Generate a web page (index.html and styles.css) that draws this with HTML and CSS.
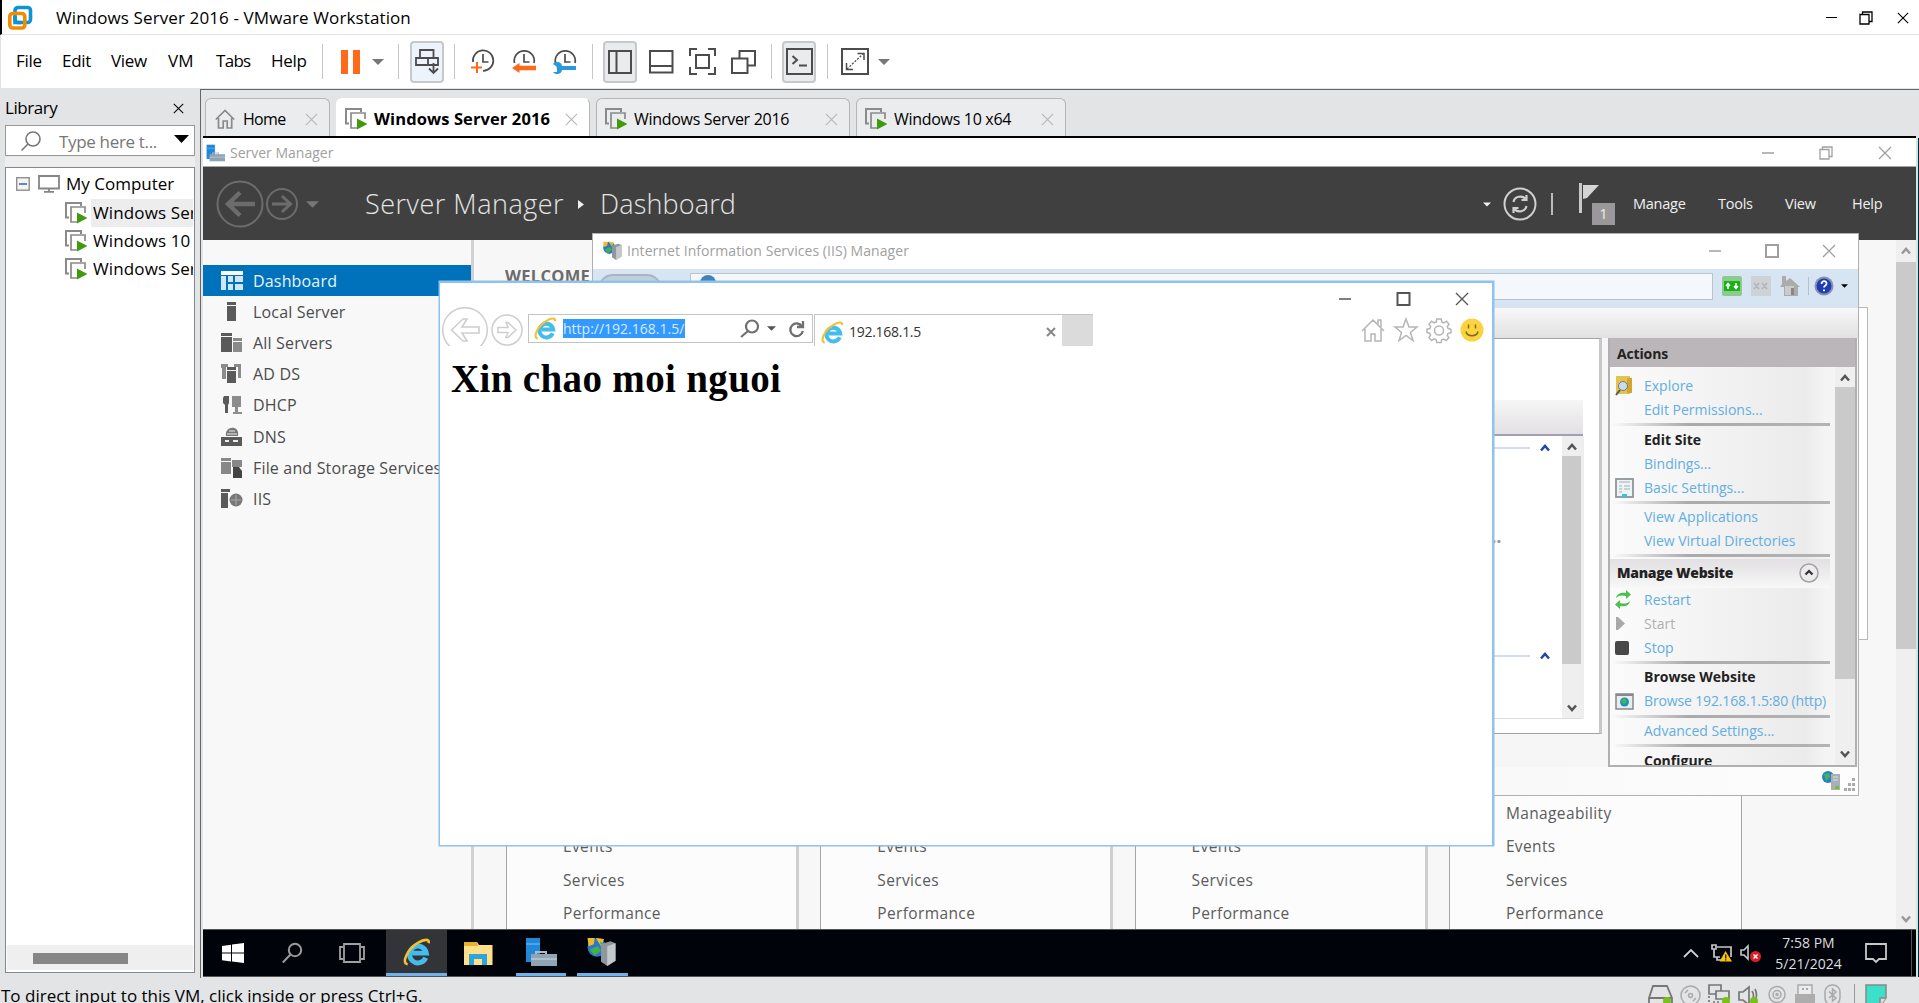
FILE: index.html
```html
<!DOCTYPE html>
<html lang="en">
<head>
<meta charset="utf-8">
<title>Windows Server 2016 - VMware Workstation</title>
<link rel="stylesheet" href="styles.css">
</head>
<body>
<svg class="defs" width="0" height="0">
  <symbol id="vm" viewBox="0 0 22 22"><path d="M4 15.500H1V1h15v3" fill="none" stroke="#8a8a8a" stroke-width="2"/><path d="M12 20H6V5h14v6" fill="none" stroke="#8a8a8a" stroke-width="1.700"/><path d="M12 10.500v11l10.500-5.500z" fill="#3f9b0b"/></symbol>
  <symbol id="cross" viewBox="0 0 14 14"><path d="M1 1l12 12M13 1L1 13" fill="none" stroke="currentColor" stroke-width="1.300"/></symbol>
  <symbol id="min" viewBox="0 0 14 14"><path d="M1 7h12" stroke="currentColor" stroke-width="1.500"/></symbol>
  <symbol id="max" viewBox="0 0 14 14"><path d="M1 1h12v12H1z" fill="none" stroke="currentColor" stroke-width="2"/></symbol>
  <symbol id="restore" viewBox="0 0 14 14"><path d="M1 3.500h9V13H1zM3.500 3V1H13v9.500h-2.500" fill="none" stroke="currentColor" stroke-width="1.300"/></symbol>
  <symbol id="caret" viewBox="0 0 12 6"><path d="M0 0h12L6 6z" fill="currentColor"/></symbol>
  <symbol id="up" viewBox="0 0 10 8"><path d="M1 6.500l4-4.500 4 4.500" fill="none" stroke="currentColor" stroke-width="2.500"/></symbol>
  <symbol id="down" viewBox="0 0 10 8"><path d="M1 1.500L5 6l4-4.500" fill="none" stroke="currentColor" stroke-width="2.500"/></symbol>
  <symbol id="ie" viewBox="0 0 24 24"><path d="M19.500 17A7.200 7.200 0 1 1 20 13H8" fill="none" stroke="#45bdec" stroke-width="4.200"/><path d="M4 22.500C-2 22 4 9 13 4c5-3 10-3.500 9 .5" fill="none" stroke="#f2c230" stroke-width="2.200"/></symbol>
  <symbol id="sm" viewBox="0 0 32 28"><path d="M1 0h14v24H1z" fill="#2188d8"/><path d="M1 6h14" stroke="#57aef0" stroke-width="1.500"/><path d="M11 17v-3h10v3" fill="none" stroke="#a9bccb" stroke-width="2"/><path d="M6 16h26v12H6z" fill="#8fa5b5"/><path d="M6 21h26" stroke="#b9c8d4" stroke-width="1.500"/></symbol>
  <symbol id="iis" viewBox="0 0 28 28"><circle cx="10" cy="10" r="9" fill="#2a78c8"/><path d="M1 1h7l-1 6-5 2zM9 1l8 1-3 7z" fill="#f2bb2e"/><path d="M3 12l8-3 3 4-6 5zM13 4l5 4-3 5z" fill="#45b04a"/><path d="M14 7l9-3 5 2v17l-8 5-6-4z" fill="#8e979d"/><path d="M20 9l8-3v17l-8 5z" fill="#c3c8cb"/></symbol>
</svg>

<header class="titlebar">
  <svg class="logo" viewBox="0 0 24 24"><rect x="7" y="1.500" width="15.500" height="15" rx="3" fill="none" stroke="#0f94d2" stroke-width="3.600"/><rect x="1.800" y="7.500" width="15" height="14.500" rx="3" fill="none" stroke="#f38b00" stroke-width="3.600"/><path d="M7 10v6.500h6" fill="none" stroke="#0f94d2" stroke-width="3.600"/></svg>
  <span>Windows Server 2016 - VMware Workstation</span>
  <div class="winctl"><svg width="12" height="14"><path d="M0 6.500h11" stroke="#000"/></svg><svg width="14" height="14"><use href="#restore"/></svg><svg width="12" height="14"><use href="#cross"/></svg></div>
</header>

<nav class="menubar">
  <span class="m1">File</span><span class="m2">Edit</span><span class="m3">View</span><span class="m4">VM</span><span class="m5">Tabs</span><span class="m6">Help</span>
  <i class="sep s1"></i>
  <svg class="pause" width="19" height="24"><path d="M0 0h7v24H0zM12 0h7v24h-7z" fill="#ff6a1a"/></svg>
  <svg class="drop" width="12" height="6"><use href="#caret"/></svg>
  <i class="sep s2"></i>
  <span class="btn send"><svg width="24" height="26" fill="none" stroke="#4c4c4c" stroke-width="1.800"><path d="M5 9V1h13.500v8M1 9h22v7H1zM13 9v7M18.500 14v10M14 19.500l4.500 4.500 4.500-4.500"/></svg></span>
  <i class="sep s3"></i>
  <svg class="clk" width="24" height="26"><path d="M2 13A10.200 10.200 0 1 1 12 21.800" fill="none" stroke="#4c4c4c" stroke-width="1.700"/><path d="M12 5v8h5.500" fill="none" stroke="#4c4c4c" stroke-width="1.700"/><path d="M6 13v11M0 18.500h11" stroke="#ff6a1a" stroke-width="2"/></svg>
  <svg class="clk" width="24" height="26"><path d="M2.500 14a10 10 0 1 1 19.500 0" fill="none" stroke="#4c4c4c" stroke-width="1.700"/><path d="M12 5v8h5.500" fill="none" stroke="#4c4c4c" stroke-width="1.700"/><path d="M0 19l7.500-5v2.700H24v4.600H7.500V24z" fill="#ff6a1a"/></svg>
  <svg class="clk" width="24" height="26"><path d="M2.500 14a10 10 0 1 1 19.500 0" fill="none" stroke="#4c4c4c" stroke-width="1.700"/><path d="M12 5v8h5.500" fill="none" stroke="#4c4c4c" stroke-width="1.700"/><path d="M0 15a5 5 0 0 1 9 2h14v4H9a5 5 0 0 1-9 2h4v-2.500l-.5-3z" fill="#2a98dc"/></svg>
  <i class="sep s4"></i>
  <span class="btn tall"><svg width="24" height="24" fill="none" stroke="#4c4c4c" stroke-width="2"><path d="M1 1h22v22H1zM8.500 1v22"/></svg></span>
  <svg class="i1" width="25" height="24" fill="none" stroke="#4c4c4c" stroke-width="2"><path d="M1 1h22.500v21.500H1zM1 16h23"/></svg>
  <svg class="i2" width="27" height="27" fill="none" stroke="#4c4c4c" stroke-width="2"><path d="M8 1H1v7M19 1h7v7M8 26H1v-7M19 26h7v-7M7 7h13v13H7z"/></svg>
  <svg class="i3" width="25" height="24" fill="none" stroke="#4c4c4c" stroke-width="2"><path d="M1 8.500h15.500V23H1zM8.500 8V1H24v14.500h-7"/></svg>
  <i class="sep s5"></i>
  <span class="btn tall"><svg width="27" height="27" fill="none" stroke="#4c4c4c" stroke-width="2"><path d="M1 1h25v25H1zM6.500 8l4.500 4-4.500 4M13 17.500h8"/></svg></span>
  <i class="sep s6"></i>
  <svg class="i4" width="28" height="27" fill="none" stroke="#4c4c4c" stroke-width="2"><path d="M1 1h26v25H1z"/><path d="M16.500 5.500H23V12M5.500 15v6.500H12" stroke-width="1.500"/><path d="M6 21L22 6" stroke-width="1.300" stroke-dasharray="2 1.500"/></svg>
  <svg class="drop" width="12" height="6"><use href="#caret"/></svg>
</nav>

<div class="main">
  <aside class="library">
    <div class="libhead"><span>Library</span><svg width="11" height="11"><use href="#cross"/></svg></div>
    <div class="search"><svg width="20" height="20" fill="none" stroke="#777" stroke-width="1.600"><circle cx="12" cy="8" r="7"/><path d="M7 13l-6.500 6.500"/></svg><span>Type here t...</span><svg class="sc" width="15" height="8"><path d="M0 0h15L7.500 8z"/></svg></div>
    <div class="tree">
      <div class="root"><svg width="14" height="14"><rect x=".7" y=".7" width="12.500" height="12.500" fill="#f4f4f4" stroke="#8f8f8f" stroke-width="1.400"/><path d="M3 7h8" stroke="#3a5fae" stroke-width="1.500"/></svg><svg width="22" height="18" fill="none" stroke="#858585" stroke-width="1.800"><path d="M1 1h20v12.500H1zM11 13v3.500M6 16.800h10"/></svg><span>My Computer</span></div>
      <div class="vmrow"><svg width="22" height="22"><use href="#vm"/></svg><span class="hl">Windows Server 2016</span></div>
      <div class="vmrow"><svg width="22" height="22"><use href="#vm"/></svg><span>Windows 10 x64</span></div>
      <div class="vmrow"><svg width="22" height="22"><use href="#vm"/></svg><span>Windows Server 2016</span></div>
      <div class="hscroll"><i></i></div>
    </div>
  </aside>

  <section class="work">
    <div class="tabs">
      <div class="tab t1"><svg width="20" height="20" fill="none" stroke="#8a8a8a" stroke-width="1.700"><path d="M.8 10.500L10 1.500l9.200 9M3.500 9v10h4.700v-7h4v7h4.500V9"/></svg><span>Home</span><svg class="x" width="13" height="13"><use href="#cross"/></svg></div>
      <div class="tab t2"><svg width="22" height="22"><use href="#vm"/></svg><span>Windows Server 2016</span><svg class="x" width="13" height="13"><use href="#cross"/></svg></div>
      <div class="tab t3"><svg width="22" height="22"><use href="#vm"/></svg><span>Windows Server 2016</span><svg class="x" width="13" height="13"><use href="#cross"/></svg></div>
      <div class="tab t4"><svg width="22" height="22"><use href="#vm"/></svg><span>Windows 10 x64</span><svg class="x" width="13" height="13"><use href="#cross"/></svg></div>
    </div>

    <div class="desk">
      <div class="smtitle"><svg width="19" height="18"><use href="#sm"/></svg><span>Server Manager</span><svg class="c1" width="14" height="14"><use href="#min"/></svg><svg class="c2" width="14" height="14"><use href="#restore"/></svg><svg class="c3" width="14" height="14"><use href="#cross"/></svg></div>
      <div class="smhead">
        <svg class="back" width="48" height="48" fill="none" stroke="#6c6c6c"><circle cx="24" cy="24" r="22.500" stroke-width="2"/><path d="M39 24H12M24 12.500L12 24l12 11.500" stroke-width="4.500"/></svg>
        <svg class="fwd" width="32" height="32" fill="none" stroke="#6c6c6c"><circle cx="16" cy="16" r="15" stroke-width="2"/><path d="M6 16h18M16 8l8.500 8-8.500 8" stroke-width="3"/></svg>
        <svg class="dd" width="13" height="7"><use href="#caret"/></svg>
        <span class="crumb a">Server Manager</span><svg class="tri" width="6" height="9"><path d="M0 0v9l6-4.500z" fill="#eee"/></svg><span class="crumb">Dashboard</span>
        <div class="smright">
          <svg width="8" height="5"><use href="#caret"/></svg>
          <svg class="ref" width="34" height="34" fill="none" stroke="#cfcfcf"><circle cx="17" cy="17" r="15.500" stroke-width="2"/><path d="M10.500 15c1-6 9-7 12-3M23.500 8v5h-5M23.500 19c-1 6-9 7-12 3M10.500 26v-5h5" stroke-width="2.200"/></svg>
          <i class="bar"></i>
          <span class="flag"><svg width="21" height="30"><path d="M0 0h3v30H0z" fill="#c9c9c9"/><path d="M4 2h16L8 15l-4 1z" fill="#d5d5d5"/></svg><em>1</em></span>
          <span class="r1">Manage</span><span class="r2">Tools</span><span class="r3">View</span><span class="r4">Help</span>
        </div>
      </div>
      <div class="smbody">
        <div class="smnav">
          <div class="on"><svg width="22" height="20"><path d="M0 0h22v4H0z" fill="#fff"/><path d="M0 5h5v14H0zM7 5h5v6H7zM14 5h8v6h-8zM7 13h5v6H7zM14 13h8v6h-8z" fill="#cfe6f7"/></svg><span>Dashboard</span></div>
          <div><svg width="22" height="20" fill="#5a5a5a"><path d="M6 0h9v3H6zM6 4h9v15H6z"/></svg><span>Local Server</span></div>
          <div><svg width="22" height="20" fill="#5a5a5a"><path d="M0 0h11v3H0zM0 4h11v15H0z"/><path d="M12 5h9v3h-9zM12 9h9v10h-9z" fill="#8a8a8a"/></svg><span>All Servers</span></div>
          <div><svg width="22" height="20" fill="#5a5a5a"><path d="M0 0h7v3H5v12H1V4H0zM13 0h7v14h-3V3h-4z" fill="#8c8c8c"/><path d="M6 3h9v3H6zM6 7h9v12H6z"/></svg><span>AD DS</span></div>
          <div><svg width="22" height="20" fill="#5a5a5a"><path d="M3 1h5v7l-1 2v8H4v-8L2 8V3z"/><path d="M11 1h9v11h-9zM14 12h3v5h4v2h-9v-2h2z" fill="#8c8c8c"/></svg><span>DHCP</span></div>
          <div><svg width="22" height="20" fill="#5a5a5a"><path d="M5 9c-2-10 14-12 12 0z" fill="#777"/><path d="M8 4h6M6 7h10" stroke="#eee"/><path d="M0 10h21v9H0z"/><path d="M4 14h4M12 14h5" stroke="#eee" stroke-width="2"/></svg><span>DNS</span></div>
          <div><svg width="22" height="20" fill="#888"><path d="M0 0h10v3H0zM0 4h10v12H0zM11 2h10v7H11z"/><path d="M12 9h6l3 4v7h-9z" fill="#444"/></svg><span>File and Storage Services</span></div>
          <div><svg width="22" height="20" fill="#5a5a5a"><path d="M0 0h9v3H0zM0 4h7v15H0z"/><circle cx="15" cy="11" r="6.500" fill="#777"/><path d="M10 11h10M15 6v10" stroke="#aaa"/></svg><span>IIS</span></div>
        </div>
        <div class="smcontent">
          <h2>WELCOME</h2>
          <div class="welcome"></div>
          <div class="cards">
            <ul><li>Manageability<li>Events<li>Services<li>Performance</ul>
            <ul><li>Manageability<li>Events<li>Services<li>Performance</ul>
            <ul><li>Manageability<li>Events<li>Services<li>Performance</ul>
            <ul><li>Manageability<li>Events<li>Services<li>Performance</ul>
          </div>
        </div>
        <div class="vscroll big"><svg width="10" height="8"><use href="#up"/></svg><i></i><svg width="10" height="8"><use href="#down"/></svg></div>
      </div>
      <div class="taskbar">
        <svg class="k1" width="22" height="20" fill="#fff"><path d="M0 3l9-1.300V9.500H0zM10 1.500L22 0v9.500H10zM0 10.500h9v8L0 17.300zM10 10.500h12V20l-12-1.500z"/></svg>
        <svg class="k2" width="20" height="20" fill="none" stroke="#9a9a9a" stroke-width="2"><circle cx="13" cy="7" r="6.200"/><path d="M8.500 11.500L.8 19.500"/></svg>
        <svg class="k3" width="26" height="20" fill="none" stroke="#a0a0a0" stroke-width="1.800"><path d="M5 1h16v18H5zM4 4H1v12h3M22 4h3v12h-3"/></svg>
        <span class="run ie"><svg width="28" height="28"><use href="#ie"/></svg></span>
        <svg class="k4" width="29" height="23"><path d="M0 0h13l2 3h13.500v20H0z" fill="#ffe08a"/><path d="M0 0h13l1 4H0z" fill="#e5b22f"/><path d="M5 23V12h18v11h-5v-6h-8v6z" fill="#2ea3dc"/></svg>
        <span class="run s"><svg width="32" height="28"><use href="#sm"/></svg></span>
        <span class="run i"><svg width="30" height="29"><use href="#iis"/></svg></span>
        <div class="tray">
          <svg width="16" height="9" fill="none" stroke="#d0d0d0" stroke-width="1.800"><path d="M1 8l7-7 7 7"/></svg>
          <svg class="y2" width="21" height="18"><path d="M1 1h4v4H1zM6 3h14v10M3 5v8h6M6 13v3h5" fill="none" stroke="#c8c8c8" stroke-width="1.700"/><path d="M14.500 7L21 17.500H8.500z" fill="#fdbf0f"/><path d="M14.700 10.500v4M14.700 15.300v1.300" stroke="#222" stroke-width="1.400"/></svg>
          <svg class="y3" width="22" height="18"><path d="M1 5h3l4-4v13l-4-4H1z" fill="none" stroke="#c8c8c8" stroke-width="1.600"/><circle cx="15.500" cy="11.500" r="5.500" fill="#d9202a"/><path d="M13.500 9.500l4 4M17.500 9.500l-4 4" stroke="#fff" stroke-width="1.400"/></svg>
          <div class="clock"><span>7:58 PM</span><span>5/21/2024</span></div>
          <svg class="y4" width="22" height="20" fill="none" stroke="#c8c8c8" stroke-width="1.800"><path d="M1 1h20v15h-7l-3 3-3-3H1z"/></svg>
          <i></i>
        </div>
      </div>

      <div class="iiswin">
        <div class="iistitle"><svg width="20" height="19"><use href="#iis"/></svg><span>Internet Information Services (IIS) Manager</span><svg class="c1" width="14" height="14"><use href="#min"/></svg><svg class="c2" width="14" height="14"><use href="#max"/></svg><svg class="c3" width="14" height="14"><use href="#cross"/></svg></div>
        <div class="iisaddr">
          <i class="pill"></i>
          <div class="field"><svg width="18" height="18"><circle cx="9" cy="5" r="8" fill="#3f83b8"/></svg></div>
          <svg class="a1" width="20" height="20"><rect width="20" height="20" rx="2" fill="#8fc98f"/><path d="M2 5h16v10H2z" fill="#16b316"/><path d="M6 13V8M4 10l2-2.500L8 10M14 7v5M12 10l2 2.500 2-2.500" fill="none" stroke="#fff" stroke-width="1.600"/></svg>
          <svg class="a2" width="20" height="20"><rect width="20" height="20" rx="1" fill="#cdd2d7"/><path d="M3 7l5 6M8 7l-5 6M11 7l5 6M16 7l-5 6" stroke="#b0b5ba" stroke-width="1.600"/></svg>
          <svg class="a3" width="20" height="20"><path d="M2 0h4v5l4-3 10 9h-2v9H4v-9H0l2-3z" fill="#a9abad"/><path d="M5 10h9v9H5z" fill="#c9cbcd"/><path d="M11 12h3v7h-3z" fill="#888"/></svg>
          <i class="vs"></i>
          <svg class="a4" width="20" height="20"><circle cx="10" cy="10" r="9.500" fill="#8592b5"/><circle cx="10" cy="10" r="7.500" fill="#1d3db2"/><path d="M7.500 8c0-4 5.500-3.500 5 0-.3 1.500-2.500 2-2.500 3.500M10 13.500v1.800" fill="none" stroke="#fff" stroke-width="1.800"/></svg>
          <svg class="a5" width="7" height="4"><use href="#caret"/></svg>
        </div>
        <div class="iisband"></div>
        <div class="iismain">
          <div class="features">
            <div class="fhead"></div>
            <div class="flist"><div class="fgroups"><div class="g g1"><i></i><svg width="10" height="8"><use href="#up"/></svg></div><b class="dots">...</b><div class="g g2"><i></i><svg width="10" height="8"><use href="#up"/></svg></div></div>
              <div class="vscroll mid"><svg width="10" height="8"><use href="#up"/></svg><i></i><svg width="10" height="8"><use href="#down"/></svg></div></div>
          </div>
          <div class="actions">
            <div class="ahead"><b>Actions</b></div>
            <div class="abody">
              <div class="alist">
                <p><svg width="18" height="20"><path d="M1 0h14v18H1z" fill="#e6c24f"/><path d="M12 2h5v15h-5z" fill="#d2a52e"/><circle cx="8" cy="10" r="4.500" fill="#c8dcea" stroke="#6b7c88"/><path d="M5 14l-4 5" stroke="#555" stroke-width="2"/></svg><span>Explore</span></p>
                <p><span>Edit Permissions...</span></p><hr>
                <p><b>Edit Site</b></p>
                <p><span>Bindings...</span></p>
                <p><svg width="19" height="20"><rect x="1" y="1" width="17" height="18" fill="#eef3f6" stroke="#8e9499" stroke-width="1.800"/><path d="M4 4h11M4 8h3M9 8h6M4 11h3M9 11h6M4 14h3" stroke="#a3adb5"/><path d="M7 16h5v3H7z" fill="#35c3dd"/></svg><span>Basic Settings...</span></p><hr>
                <p><span>View Applications</span></p>
                <p><span>View Virtual Directories</span></p><hr>
                <h3><b>Manage Website</b><svg width="20" height="20"><circle cx="10" cy="10" r="9" fill="#ececec" stroke="#a2a2a2" stroke-width="1.500"/><path d="M6.500 11.500L10 8l3.500 3.500" fill="none" stroke="#333" stroke-width="2.200"/></svg></h3>
                <p><svg width="16" height="19" fill="#4cc04c"><path d="M1 8c1-5 6-6 10-5V0l5 4.500L11 9V6C7 5 4 5 1 8zM15 11c-1 5-6 6-10 5v3l-5-4.500L5 10v3c4 1 7 1 10-2z"/></svg><span>Restart</span></p>
                <p class="off"><svg width="10" height="13"><path d="M1 0h2l7 6.500L3 13H1z" fill="#a8a8a8"/></svg><span>Start</span></p>
                <p><svg width="14" height="14"><rect width="14" height="14" rx="2" fill="#484848"/></svg><span>Stop</span></p><hr>
                <p><b>Browse Website</b></p>
                <p><svg width="19" height="17"><rect x="1" y="1" width="17" height="15" fill="#e9edf0" stroke="#85898d" stroke-width="1.500"/><path d="M1 2h17" stroke="#85898d" stroke-width="2"/><circle cx="9.500" cy="9" r="4.500" fill="#1c93b5"/><circle cx="9" cy="8" r="2.500" fill="#40b85c"/></svg><span class="tight">Browse 192.168.1.5:80 (http)</span></p><hr>
                <p><span>Advanced Settings...</span></p><hr>
                <p><b>Configure</b></p>
              </div>
              <div class="vscroll act"><svg width="10" height="8"><use href="#up"/></svg><i></i><svg width="10" height="8"><use href="#down"/></svg></div>
            </div>
          </div>
        </div>
        <div class="iisstatus"><svg width="19" height="20"><circle cx="6" cy="6" r="6" fill="#2a7fc4"/><path d="M2 3l5-1 1 4-4 4z" fill="#44b45c"/><path d="M9 3h9v16H9z" fill="#a9afb3"/><path d="M11 6h5M11 9h5" stroke="#e0e0e0"/><path d="M13 15h4v3h-4z" fill="#67c73c"/></svg><svg width="11" height="14" fill="#aaa"><path d="M8 0h3v3H8zM4 5h3v3H4zM8 5h3v3H8zM0 10h3v3H0zM4 10h3v3H4zM8 10h3v3H8z"/></svg></div>
      </div>

      <div class="iewin">
        <div class="ietitle"><svg class="c1" width="14" height="14"><use href="#min"/></svg><svg class="c2" width="15" height="14"><use href="#max"/></svg><svg class="c3" width="14" height="14"><use href="#cross"/></svg></div>
        <div class="iebar">
          <svg class="b1" width="47" height="40" fill="none" stroke="#cecece"><circle cx="23" cy="23" r="22.300" stroke-width="1.500"/><path d="M9.500 23L21 12h4l-5 8h17v6H20l5 8h-4z" stroke-width="1.600"/></svg>
          <svg class="b2" width="32" height="32" fill="none" stroke="#cecece"><circle cx="16" cy="16" r="15" stroke-width="1.500"/><path d="M25 16l-8-7.500h-2l2 5H7v5h10l-2 5h2z" stroke-width="1.500"/></svg>
          <div class="url"><svg width="23" height="23"><use href="#ie"/></svg><span>http://192.168.1.5/</span><svg class="u1" width="20" height="19" fill="none" stroke="#6f6f6f" stroke-width="2.200"><circle cx="12" cy="7.500" r="6"/><path d="M8 12l-7 6"/></svg><svg class="u2" width="9" height="5"><use href="#caret"/></svg><svg class="u3" width="17" height="18" fill="none" stroke="#6f6f6f" stroke-width="2.300"><path d="M14 6.500A6.300 6.300 0 1 0 14.800 11M15 1v6H9"/></svg></div>
          <div class="ietab"><svg width="23" height="23"><use href="#ie"/></svg><span>192.168.1.5</span><svg class="x" width="10" height="10"><path d="M1 1l8 8M9 1L1 9" stroke="#888" stroke-width="2"/></svg></div>
          <div class="newtab"></div>
          <div class="iecmd">
            <svg width="24" height="24" fill="none" stroke="#b5b5b5" stroke-width="1.500"><path d="M1 13L12 2l11 11M4 11v12h6v-7h4v7h6V11M17 6V2h3v7"/></svg>
            <svg width="24" height="24" fill="none" stroke="#b5b5b5" stroke-width="1.500"><path d="M12 1l3 8h8l-6.500 5.500 2.500 8-7-5-7 5 2.500-8L1 9h8z"/></svg>
            <svg width="24" height="24" fill="none" stroke="#b5b5b5" stroke-width="1.500"><path d="M9.800 1h4.400l.6 3 2 .8 2.700-1.600 2.500 3-1.700 2.400.8 2 2.900.7v3.400l-3 .7-.8 2 1.700 2.400-2.700 2.800-2.500-1.600-2 .8-.5 2.700H9.800l-.6-2.800-2-.8-2.600 1.600-2.600-2.800 1.600-2.500-.8-2L0 14.500v-3.300l2.900-.6.8-2L2 6.200l2.600-3 2.600 1.600 2-.8z"/><circle cx="12" cy="12.500" r="4.500"/></svg>
            <svg width="24" height="24"><circle cx="12" cy="12" r="11.500" fill="#fcd33f"/><path d="M8.500 6.500v4M15.500 6.500v4M6 13.500c1 5.500 11 5.500 12 0" fill="none" stroke="#7d6b1f" stroke-width="1.500"/></svg>
          </div>
        </div>
        <h1>Xin chao moi nguoi</h1>
      </div>
    </div>
    <i class="edge"></i>
  </section>
</div>

<footer class="status">
  <span>To direct input to this VM, click inside or press Ctrl+G.</span>
  <div class="devs">
    <svg class="d1" width="25" height="22"><path d="M5 2h14l5 12v7H1v-7zM1 14h23" fill="none" stroke="#777" stroke-width="1.800"/><circle cx="19" cy="17" r="4" fill="#7ac117"/></svg>
    <svg class="d2" width="21" height="22" fill="none" stroke="#a9a9a9" stroke-width="1.500"><circle cx="10.500" cy="11.500" r="9.500"/><circle cx="10.500" cy="11.500" r="2"/><path d="M5 9l3-3M13 17l3-3"/></svg>
    <svg class="d3" width="22" height="22"><path d="M1 1h12v9H1z" fill="none" stroke="#777" stroke-width="1.700"/><path d="M8 7h13v8H8z" fill="#e3e4e6" stroke="#777" stroke-width="1.700"/><path d="M1 12v9M5 18h6" fill="none" stroke="#777" stroke-width="1.700" stroke-dasharray="2 2"/><circle cx="18" cy="17" r="4" fill="#7ac117"/></svg>
    <svg class="d4" width="21" height="22"><path d="M1 8h4l6-5v18l-6-5H1zM14 7c2 3 2 6 0 9M17 5c2 4 2 8 0 12" fill="none" stroke="#777" stroke-width="1.700"/><circle cx="16" cy="17" r="4" fill="#7ac117"/></svg>
    <svg class="d5" width="18" height="22" fill="none" stroke="#a9a9a9" stroke-width="1.500"><circle cx="9" cy="10.500" r="8"/><circle cx="9" cy="10.500" r="4"/><circle cx="9" cy="10.500" r="1"/><path d="M3 20h12"/></svg>
    <svg class="d6" width="20" height="22"><path d="M3 1h14v10H3z" fill="#ececec" stroke="#a9a9a9" stroke-width="1.500"/><path d="M7 5h2M11 5h2" stroke="#a9a9a9" stroke-width="2"/><path d="M0 10h20v12H0z" fill="#adadad"/></svg>
    <svg class="d7" width="17" height="22" fill="none" stroke="#a9a9a9" stroke-width="1.500"><rect x="1" y="1" width="15" height="20" rx="7"/><path d="M5 7.500l7 6.500-3.500 3V5L12 8l-7 6"/></svg>
    <i></i>
    <svg class="d8" width="22" height="22"><path d="M1 1h20v13l-6 8H1z" fill="#3be0c8" stroke="#888" stroke-width="1.500"/><path d="M21 14h-6v8" fill="#ddd" stroke="#888" stroke-width="1.500"/></svg>
  </div>
</footer>
</body>
</html>
```
FILE: styles.css
```css
* { box-sizing: border-box; }
html, body { margin: 0; width: 1919px; height: 1003px; overflow: hidden; }
body { display: flex; flex-direction: column; background: #e3e4e6; color: #000; font: 17px/24px "Open Sans", "Noto Sans", sans-serif; white-space: nowrap; }
svg { display: block; flex: none; overflow: visible; }
i { display: block; flex: none; }
.defs { position: absolute; }
p, h1, h2, h3, ul, li, hr { margin: 0; padding: 0; list-style: none; border: 0; }

.titlebar { height: 35px; flex: none; display: flex; align-items: center; background: #fff; border-bottom: 1px solid #e3e3e3; border-left: 2px solid #000; padding: 2px 10px 0 6px; letter-spacing: .11px; }
.logo { width: 24px; height: 24px; margin-right: 24px; }
.winctl { margin-left: auto; display: flex; gap: 21px; }
.winctl svg:nth-child(3) { margin-left: 3px; }

/* menu and toolbar */
.menubar { height: 53px; flex: none; display: flex; align-items: center; background: #fff; border-left: 1px solid #e3e3e3; padding-left: 15px; letter-spacing: -.3px; }
.m1, .m2, .m3, .m4, .m5, .m6 { padding-bottom: 2px; }
.m1 { flex: 0 0 46px; } .m2 { flex: 0 0 49px; } .m3 { flex: 0 0 57px; } .m4 { flex: 0 0 48px; letter-spacing: .2px; } .m5 { flex: 0 0 55px; letter-spacing: -.7px; } .m6 { flex: 0 0 51px; }
.sep { width: 1px; height: 35px; background: #c6c6c6; }
.pause { margin-left: 18px; }
.drop { margin-left: 12px; color: #777; }
.s2 { margin-left: 14px; }
.btn { border: 2px solid #c6c8ca; border-radius: 4px; display: flex; align-items: center; justify-content: center; height: 42px; background: #e9ebed; flex: none; }
.send { width: 34px; margin-left: 11px; background: #edf3fb; }
.s3 { margin-left: 10px; }
.clk { margin-left: 16px; }
.clk + .clk { margin-left: 17px; }
.s4 { margin-left: 15px; }
.tall { width: 34px; margin-left: 10px; }
.i1 { margin-left: 12px; } .i2 { margin-left: 15px; } .i3 { margin-left: 15px; }
.s5 { margin-left: 15px; } .s6 { margin-left: 11px; }
.i4 { margin-left: 13px; }
.i4 + .drop { margin-left: 9px; }

/* library pane */
.main { flex: none; height: 890px; display: flex; }
.library { width: 200px; flex: none; display: flex; flex-direction: column; padding-left: 5px; }
.libhead { height: 37px; display: flex; align-items: center; padding-top: 3px; letter-spacing: -.45px; }
.libhead svg { margin-left: auto; margin-right: 16px; }
.search { width: 190px; height: 31px; border: 1px solid #989898; background: #fff; display: flex; align-items: center; color: #777; padding-left: 15px; }
.search span { margin-left: 18px; padding-top: 2px; width: 113px; letter-spacing: -.33px; }
.sc { margin-bottom: 3px; margin-left: 2px; }
.tree { width: 190px; height: 806px; margin-top: 11px; border: 1px solid #84878c; background: #fff; display: flex; flex-direction: column; box-shadow: 0 -10px 0 #eee; }
.root { height: 31px; display: flex; align-items: center; padding-left: 10px; }
.root svg + svg { margin-left: 8px; }
.root span { margin-left: 6px; }
.vmrow { height: 28px; display: flex; align-items: center; padding-left: 59px; overflow: hidden; margin-right: 1px; letter-spacing: .12px; }
.vmrow span { margin-left: 4px; padding-left: 2px; height: 28px; line-height: 27px; flex: 1; overflow: hidden; }
.hl { background: #ededed; }
.hscroll { margin: auto 1px 2px; height: 25px; background: #efefef; padding: 8px 0 0 26px; }
.hscroll i { width: 95px; height: 11px; background: #868686; }

/* tab strip and guest screen frame */
.work { flex: none; width: 1719px; height: 890px; margin-top: 1px; border: solid #666; border-width: 1px 0 0 1px; display: grid; grid-template: 46px 841px / 2px 1713px 3px; background: #e3e4e6; }
.tabs { grid-column: 1 / -1; display: flex; align-items: flex-end; padding-left: 4px; }
.tab { height: 38px; display: flex; align-items: center; background: #ebecee; border: 1px solid #b4b5b7; border-bottom: 0; border-radius: 6px 6px 0 0; padding: 3px 11px 0 8px; font-size: 16px; letter-spacing: -.3px; flex: none; }
.tab .x { margin-left: auto; color: #b9b9b9; }
.t1 { width: 125px; padding-left: 9px; letter-spacing: -.7px; } .t1 span { margin-left: 8px; }
.t2 { width: 254px; margin-left: 6px; background: #fff; font-weight: 700; border-color: #fff #b4b5b7 #fff #fff; font-size: 16.500px; letter-spacing: .1px; }
.t2 span, .t3 span, .t4 span { margin-left: 7px; }
.t3 { width: 254px; margin-left: 6px; } .t4 { width: 210px; margin-left: 6px; }
.desk { grid-column: 2; position: relative; width: 1713px; height: 841px; border-top: 2px solid #000; overflow: hidden; display: flex; flex-direction: column; background: #f7f7f7; font-size: 15px; }
.edge { grid-column: 3; margin-top: 2px; border-left: 2px solid #cfe8cf; background: #06284a; height: 839px; }

/* Server Manager */
.smtitle { height: 29px; flex: none; background: #fff; border-bottom: 1px solid #a5a5a5; display: flex; align-items: center; padding-left: 3px; padding-top: 2px; color: #a0a0a0; font-size: 14px; }
.smtitle span { margin-left: 5px; }
.smtitle .c1 { margin-left: auto; } .smtitle .c2 { margin: 0 45px 0 44px; } .smtitle .c3 { margin-right: 24px; }
.smhead { height: 73px; flex: none; background: #404040; display: flex; align-items: center; color: #e4e4e4; padding-top: 1px; }
.back { margin-left: 13px; } .fwd { margin-left: 2px; } .dd { margin: 0 46px 0 8px; color: #777; }
.crumb { font-size: 27px; font-weight: 300; letter-spacing: .15px; }
.crumb.a { letter-spacing: .5px; }
.tri { margin: 0 16px 0 14px; }
.smright { margin-left: auto; display: flex; align-items: center; font-size: 14.500px; color: #f0f0f0; padding-right: 34px; letter-spacing: -.25px; }
.ref { margin-left: 12px; }
.bar { width: 2px; height: 22px; background: #bbb; margin: 0 26px 0 14px; }
.flag { position: relative; width: 36px; height: 42px; display: block; }
.flag em { position: absolute; left: 13px; top: 20px; width: 23px; height: 22px; background: #9a989b; font-style: normal; text-align: center; line-height: 22px; font-size: 14px; }
.r1 { margin-left: 18px; width: 85px; } .r2 { width: 67px; } .r3 { width: 67px; } .r4 { width: 30px; }
.smbody { height: 689px; flex: none; display: flex; overflow: hidden; }
.smnav { width: 271px; flex: none; border-right: 3px solid #d2d2d2; padding-top: 25px; background: #f8f8f8; color: #4c4c4c; font-size: 16px; letter-spacing: .17px; }
.smnav div { height: 31.1px; display: flex; align-items: center; padding: 1px 0 0 18px; }
.smnav span { margin-left: 10px; }
.smnav .on { background: #0072bc; color: #e8f3fa; }
.smcontent { flex: 1; display: flex; flex-direction: column; padding-left: 31px; min-width: 0; }
h2 { height: 67px; line-height: 72px; font-size: 16.500px; letter-spacing: .3px; color: #6b6b6b; }
.welcome { height: 333px; flex: none; background: #fff; border: 1px solid #b8b8b8; margin-right: 28px; }
.cards { display: grid; grid-template-columns: repeat(4, 293px); gap: 21.300px; margin: 20px 0 0 1px; color: #5b5b5b; font-size: 15.500px; letter-spacing: .37px; flex: none; height: 280px; }
.cards ul { background: #fcfcfc; border-left: 1px solid #a5a5a5; border-right: 3px solid #cfcfcf; padding: 137px 0 0 56px; }
.cards ul:last-child { border-right: 1px solid #a5a5a5; }
.cards li { height: 33.4px; line-height: 33px; }
.vscroll { display: flex; flex-direction: column; align-items: center; justify-content: space-between; background: #efefef; color: #555; }
.vscroll i { width: 100%; background: #cacaca; }
.big { width: 20px; flex: none; padding: 7px 0 6px; color: #999; }
.big i { height: 387px; margin-bottom: auto; margin-top: 7px; }

/* guest taskbar */
.taskbar { height: 48px; flex: none; background: #00030a; display: flex; align-items: center; border-top: 1px solid #555; border-bottom: 1px solid #555; }
.k1 { margin-left: 19px; } .k2 { margin-left: 38px; } .k3 { margin-left: 37px; }
.run { height: 46px; display: flex; justify-content: center; align-items: center; border-bottom: 3px solid #6fb1ea; flex: none; }
.ie { width: 61px; background: #333437; margin-left: 21px; }
.k4 { margin-left: 17px; }
.s { width: 50px; margin-left: 23px; } .i { width: 51px; margin-left: 11px; padding-right: 4px; }
.tray { margin-left: auto; display: flex; align-items: center; height: 46px; }
.y2 { margin-left: 12px; } .y3 { margin: 2px 13px 0 8px; }
.clock { width: 67px; display: flex; flex-direction: column; align-items: center; font-size: 14px; line-height: 21.500px; color: #dedede; }
.y4 { margin: 0 24px 0 23px; }
.tray i { width: 5px; height: 46px; border-left: 1px solid #555; }

/* IIS Manager */
.iiswin { position: absolute; left: 389px; top: 95px; width: 1267px; height: 563px; background: #f6f6f6; border: 1px solid #b0b0b0; display: flex; flex-direction: column; }
.iistitle { height: 35px; flex: none; background: #fff; display: flex; align-items: center; padding: 0 0 2px 9px; color: #a0a0a0; font-size: 14px; letter-spacing: .06px; }
.iistitle span { margin-left: 5px; }
.iistitle .c1 { margin-left: auto; } .iistitle .c2 { margin: 0 43px 0 43px; } .iistitle .c3 { margin-right: 22px; }
.iisaddr { height: 39px; flex: none; background: #d7e4f1; display: flex; align-items: center; padding-bottom: 5px; }
.pill { width: 64px; height: 30px; margin: 6px 0 0 5px; border-radius: 16px; background: #c3cedb; border: 2px solid #aab5c2; }
.field { width: 1023px; height: 27px; margin-left: 28px; background: #f4f8fd; border: 1px solid #b9c4d0; padding: 4px 8px; }
.a1 { margin-left: 9px; } .a2, .a3 { margin-left: 9px; } .vs { width: 1px; height: 18px; background: #b5c0cc; margin: 0 5px 0 8px; } .a5 { margin-left: 7px; }
.iisband { height: 30px; flex: none; background: linear-gradient(#f8f8f8, #e2e1e2); }
.iismain { height: 429px; flex: none; display: flex; padding-left: 1px; }
.features { width: 1008px; height: 396px; background: #fff; border: 1px solid #a2a2a2; border-right: 3px solid #c8c8c8; display: flex; flex-direction: column; }
.fhead { height: 36px; margin: 61px 16px 0 0; background: linear-gradient(#f6f6f6, #e3e1e3); border-bottom: 2px solid #a0a0b2; flex: none; }
.flist { height: 283px; display: flex; justify-content: flex-end; margin-right: 15px; border-bottom: 1px solid #ddd; border-right: 3px solid #eee; }
.fgroups { width: 68px; margin-right: 12px; }
.g { display: flex; align-items: center; height: 20px; color: #1f47a8; }
.g i { height: 2px; background: #d3dcf3; margin-right: 10px; flex: 1; }
.g1 { margin-top: 2px; } .g2 { margin-top: 87px; }
.dots { display: block; height: 101px; line-height: 156px; font-size: 18px; color: #a08f97; padding-left: 4px; }
.mid { width: 19px; padding: 7px 0 6px; }
.mid i { height: 208px; margin: 5px 0 auto; }
.actions { width: 249px; margin-left: 6px; border: 1px solid #b0b0b0; border-width: 0 2px 2px 2px; display: flex; flex-direction: column; }
.ahead { height: 29px; flex: none; background: #bab6ba; padding: 4px 0 0 7px; color: #222; font-size: 14px; letter-spacing: -.15px; }
.abody { flex: 1; display: flex; min-height: 0; background: linear-gradient(90deg, #fbfbfb, #ebebeb 80%, #f4f4f4 88%); }
.alist { width: 225px; overflow: hidden; padding-top: 7px; font-size: 14px; color: #62aee2; }
.alist p { height: 24px; display: flex; align-items: center; padding-left: 5px; }
.alist p svg { margin: 0 auto 0 0; }
.alist p span, .alist p b { width: 191px; margin-left: auto; flex: none; }
.alist b { color: #222; }
.alist p.off { color: #b0b0b0; }
.tight { letter-spacing: -.14px; }
.alist hr { height: 3px; margin: 1.300px 5px 1.300px 2px; background: linear-gradient(90deg, transparent, #aaa 35%, #b4b4b4); }
h3 { height: 29px; display: flex; align-items: center; background: linear-gradient(#e2e0e2, #f8f8f8); margin-right: 5px; padding: 0 11px 0 7px; justify-content: space-between; font-size: 14px; letter-spacing: -.3px; }
.act { width: 20px; padding: 7px 0; }
.act i { height: 292px; margin: 5px 0 auto; }
.iisstatus { flex: 1; background: linear-gradient(90deg, #eee, #fdfdfd); display: flex; justify-content: flex-end; align-items: center; gap: 3px; padding-right: 3px; }
.iisstatus svg + svg { margin-top: 8px; }

/* Internet Explorer */
.iewin { position: absolute; left: 236px; top: 143px; width: 1055px; height: 565px; background: #fff; border: solid #8dc3ee; border-width: 2px 2px 1px 1px; box-shadow: 0 0 0 .5px #8dc3ee; color: #555; display: flex; flex-direction: column; }
.ietitle { height: 24px; display: flex; padding: 9px 23px 0 0; justify-content: flex-end; flex: none; }
.ietitle .c2 { margin: 0 44px 0 44px; }
.iebar { height: 39px; flex: none; display: flex; align-items: flex-start; overflow: hidden; }
.b1 { margin-left: 2px; } .b2 { margin: 7px 0 0 2px; }
.url { width: 285px; height: 29px; margin: 7px 0 0 5px; border: 1px solid #c4c4c4; display: flex; align-items: center; padding-left: 5px; flex: none; }
.url span { background: #3399ff; color: #d6ebff; margin-left: 6px; width: 122px; line-height: 19px; height: 19px; font-size: 14px; }
.u1 { margin-left: 55px; } .u2 { margin-left: 7px; } .u3 { margin-left: 12px; }
.ietab { width: 248px; height: 33px; margin: 7px 0 0 1px; border: 1px solid #c4c4c4; border-width: 1px 0 0 1px; display: flex; align-items: center; padding: 2px 6px 0 6px; color: #333; font-size: 14px; letter-spacing: -.28px; flex: none; }
.ietab span { margin-left: 5px; } .ietab .x { margin-left: auto; }
.newtab { width: 31px; height: 33px; margin-top: 7px; background: #dbdbdb; border-top: 1px solid #c4c4c4; flex: none; }
.iecmd { margin: 11px 8px 0 auto; display: flex; gap: 9px; }
h1 { font: 700 39px/44px "Liberation Serif", "Times New Roman", serif; letter-spacing: .35px; color: #000; margin: 11px 0 0 11px; height: 44px; }

.status { height: 25px; flex: none; display: flex; justify-content: space-between; padding: 6px 32px 0 1px; background: #e3e4e6; }
.devs { display: flex; }
.devs i { width: 1px; height: 22px; background: #999; margin: 0 10px 0 13px; }
.d2, .d3 { margin-left: 7px; } .d4 { margin-left: 8px; } .d5 { margin-left: 9px; } .d6 { margin-left: 9px; } .d7 { margin-left: 9px; }
```
